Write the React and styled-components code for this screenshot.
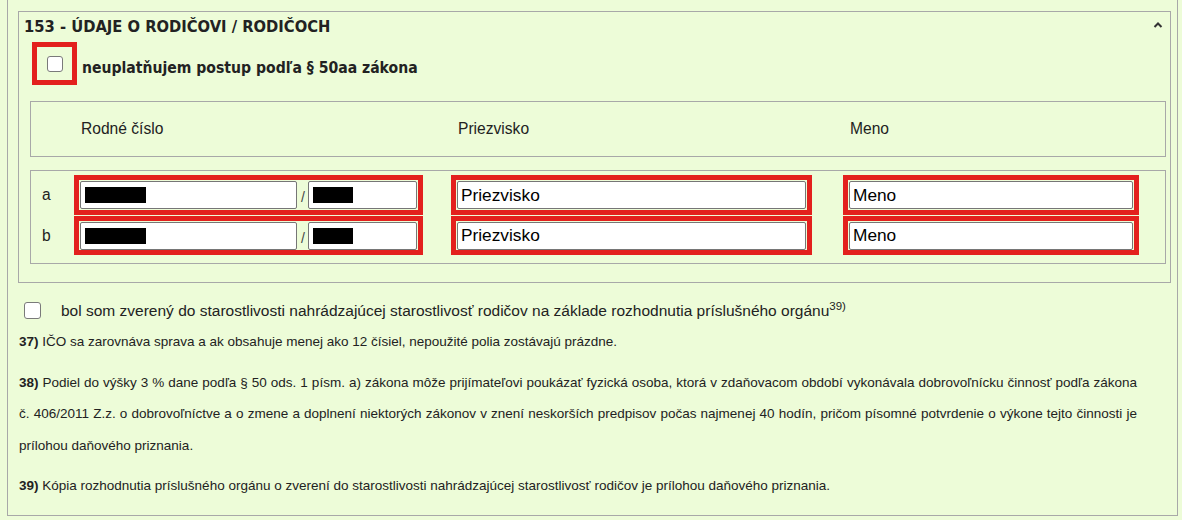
import React from "react";
import styled, { createGlobalStyle } from "styled-components";

const GlobalStyle = createGlobalStyle`
  html, body { margin: 0; padding: 0; background: #edfcd8; }
  body { font-family: "Liberation Sans", Arial, sans-serif; color: #222; }
  * { box-sizing: border-box; }
`;

const RED = "#e3201d";
const GRAY = "#a8a8a8";

const Page = styled.div`
  padding-left: 7px;
  width: 1178px;
`;

const OuterBox = styled.div`
  height: 516px;
  border: 1px solid ${GRAY};
  border-top: none;
  padding: 11px 6px 0 10px;
`;

const Fieldset = styled.section`
  border: 1px solid ${GRAY};
  padding: 0 0 18px 0;
`;

const SectionHeader = styled.div`
  display: flex;
  align-items: center;
  justify-content: space-between;
  padding: 5px 7px 5px 5px;
  height: 30px;
`;

const SectionTitle = styled.h2`
  margin: 0;
  font-family: "DejaVu Sans Condensed", "DejaVu Sans", Verdana, sans-serif;
  font-stretch: condensed;
  font-weight: bold;
  font-size: 16.4px;
  line-height: 20px;
  color: #222;
`;

const Chevron = styled.svg`
  display: block;
  width: 10px;
  height: 7px;
  margin-top: -5px;
`;

const CheckRow = styled.label`
  display: flex;
  align-items: center;
  gap: 5px;
  margin-left: 13px;
`;

const CheckFrame = styled.span`
  display: flex;
  align-items: center;
  justify-content: center;
  width: 45px;
  height: 43px;
  border: 5px solid ${RED};
`;

const Checkbox = styled.input.attrs({ type: "checkbox" })`
  appearance: none;
  -webkit-appearance: none;
  margin: 0;
  width: ${(p) => p.$size || 16}px;
  height: ${(p) => p.$size || 16}px;
  border: 1px solid #7a7a7a;
  border-radius: 3px;
  background: #fff;
`;

const StrongLabel = styled.span`
  font-family: "DejaVu Sans Condensed", "DejaVu Sans", Verdana, sans-serif;
  font-stretch: condensed;
  font-weight: bold;
  font-size: 15.6px;
  color: #222;
  margin-top: 8px;
`;

const TableBox = styled.div`
  margin: ${(p) => p.$mt}px 4px 0 11px;
  border: 1px solid ${GRAY};
  padding: ${(p) => p.$pad};
  display: flex;
  flex-direction: column;
  gap: 1px;
`;

const GridRow = styled.div`
  display: grid;
  grid-template-columns: 43px 377px 392px auto;
  align-items: center;
  height: ${(p) => p.$h}px;
`;

const ColLabel = styled.div`
  font-size: 15.6px;
  color: #222;
  padding-left: 7px;
`;

const RowLetter = styled.div`
  font-size: 15.6px;
  color: #222;
  padding-left: 11px;
`;

const Highlight = styled.div`
  display: flex;
  align-items: center;
  width: ${(p) => p.$w}px;
  height: ${(p) => p.$h || 40}px;
  border: 5px solid ${RED};
  padding: 1px;
`;

const Field = styled.div`
  position: relative;
  width: ${(p) => p.$w}px;
  height: 28px;
`;

const TextInput = styled.input`
  display: block;
  width: 100%;
  height: 28px;
  margin: 0;
  border: 1px solid #767676;
  border-radius: 2px;
  background: #fff;
  padding: 0 3px;
  font-family: "Liberation Sans", Arial, sans-serif;
  font-size: 17.3px;
  color: #000;
  outline: none;
`;

const Redaction = styled.span`
  position: absolute;
  left: 5px;
  top: 6px;
  width: ${(p) => p.$w}px;
  height: 16px;
  background: #000;
`;

const Slash = styled.span`
  width: 11px;
  text-align: center;
  font-size: 14px;
  color: #444;
  padding-top: 4px;
`;

const ConsentRow = styled.label`
  display: flex;
  align-items: center;
  margin: 17px 0 0 6px;
  gap: 20px;
`;

const ConsentText = styled.span`
  font-size: 15.5px;
  color: #222;
  margin-top: 2px;
`;

const Sup = styled.sup`
  font-size: 11.5px;
  vertical-align: 6px;
  line-height: 0;
`;

const Notes = styled.div`
  padding: 6px 0 0 1px;
  width: 1119px;
`;

const Note = styled.p`
  margin: 0 0 9px 0;
  font-size: 13.5px;
  line-height: 31.5px;
  color: #222;
  text-align: justify;
`;

const NoteNum = styled.b`
  font-weight: bold;
`;

function RodneCislo({ h }) {
  return (
    <Highlight $w={349} $h={h}>
      <Field $w={218}>
        <TextInput aria-label="Rodné číslo" />
        <Redaction $w={61} />
      </Field>
      <Slash>/</Slash>
      <Field $w={109}>
        <TextInput aria-label="Rodné číslo - koncovka" />
        <Redaction $w={40} />
      </Field>
    </Highlight>
  );
}

function PersonRow({ letter, h }) {
  return (
    <GridRow $h={h}>
      <RowLetter>{letter}</RowLetter>
      <RodneCislo h={h} />
      <Highlight $w={361} $h={h}>
        <Field $w={349}>
          <TextInput defaultValue="Priezvisko" />
        </Field>
      </Highlight>
      <Highlight $w={296} $h={h}>
        <Field $w={284}>
          <TextInput defaultValue="Meno" />
        </Field>
      </Highlight>
    </GridRow>
  );
}

export default function App() {
  return (
    <>
      <GlobalStyle />
      <Page>
        <OuterBox>
          <Fieldset>
            <SectionHeader>
              <SectionTitle>153 - ÚDAJE O RODIČOVI / RODIČOCH</SectionTitle>
              <Chevron viewBox="0 0 10 7">
                <polyline points="1.5,6 5,2.5 8.5,6" fill="none" stroke="#333" strokeWidth="2" />
              </Chevron>
            </SectionHeader>
            <CheckRow>
              <CheckFrame>
                <Checkbox />
              </CheckFrame>
              <StrongLabel>neuplatňujem postup podľa § 50aa zákona</StrongLabel>
            </CheckRow>
            <TableBox $mt={16} $pad="0">
              <GridRow $h={54}>
                <span />
                <ColLabel>Rodné číslo</ColLabel>
                <ColLabel>Priezvisko</ColLabel>
                <ColLabel>Meno</ColLabel>
              </GridRow>
            </TableBox>
            <TableBox $mt={13} $pad="4px 0 8px 0">
              <PersonRow letter="a" h={40} />
              <PersonRow letter="b" h={39} />
            </TableBox>
          </Fieldset>
          <ConsentRow>
            <Checkbox $size={17} />
            <ConsentText>
              bol som zverený do starostlivosti nahrádzajúcej starostlivosť rodičov na základe rozhodnutia príslušného orgánu
              <Sup>39)</Sup>
            </ConsentText>
          </ConsentRow>
          <Notes>
            <Note>
              <NoteNum>37)</NoteNum> IČO sa zarovnáva sprava a ak obsahuje menej ako 12 čísiel, nepoužité polia zostávajú prázdne.
            </Note>
            <Note>
              <NoteNum>38)</NoteNum> Podiel do výšky 3 % dane podľa § 50 ods. 1 písm. a) zákona môže prijímateľovi poukázať fyzická osoba, ktorá v zdaňovacom období vykonávala dobrovoľnícku činnosť podľa zákona č. 406/2011 Z.z. o dobrovoľníctve a o zmene a doplnení niektorých zákonov v znení neskorších predpisov počas najmenej 40 hodín, pričom písomné potvrdenie o výkone tejto činnosti je prílohou daňového priznania.
            </Note>
            <Note>
              <NoteNum>39)</NoteNum> Kópia rozhodnutia príslušného orgánu o zverení do starostlivosti nahrádzajúcej starostlivosť rodičov je prílohou daňového priznania.
            </Note>
          </Notes>
        </OuterBox>
      </Page>
    </>
  );
}
